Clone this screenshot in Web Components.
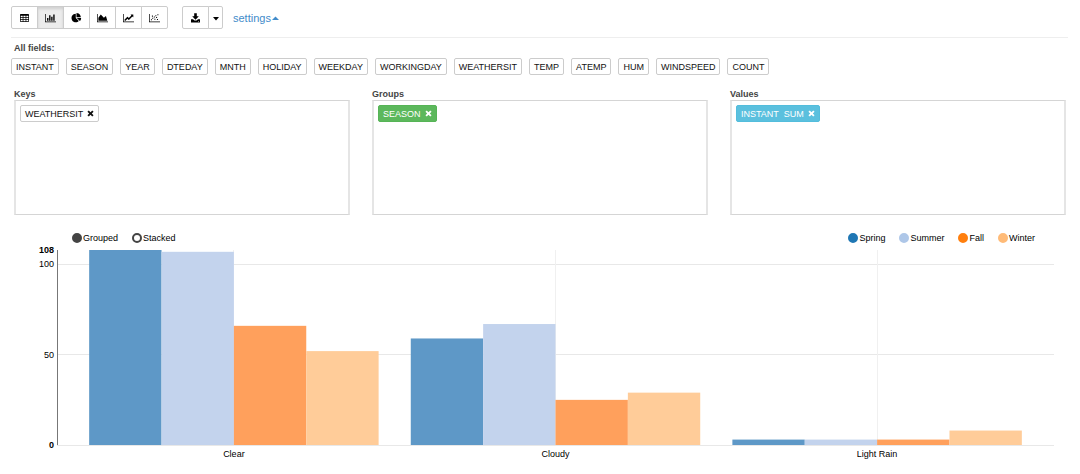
<!DOCTYPE html>
<html lang="en">
<head>
<meta charset="utf-8">
<title>Pivot chart</title>
<style>
body { margin: 0; background: #fff; font-family: "Liberation Sans", Arial, sans-serif; font-size: 9px; line-height: 12px; color: #222; }
</style>
</head>
<body>
<pivot-app></pivot-app>
<script>
const ICONS = {
  table: '<svg viewBox="0 0 11 10"><path fill-rule="evenodd" d="M1.800 1h7.400a.8.8 0 0 1 .8.8v6.400a.8.8 0 0 1-.8.8H1.800a.8.8 0 0 1-.8-.8V1.800a.8.8 0 0 1 .8-.8zM1.700 2.700v1.500h2V2.700zM4.400 2.700v1.500h2.200V2.700zM7.300 2.700v1.500h2V2.700zM1.700 4.900v1.400h2V4.900zM4.400 4.900v1.400h2.200V4.900zM7.300 4.900v1.400h2V4.900zM1.700 7v1.300h2V7zM4.400 7v1.300h2.200V7zM7.300 7v1.300h2V7z"/></svg>',
  bar: '<svg viewBox="0 0 2048 1792"><path d="M640 896v512h-256v-512h256zM1024 384v1024h-256v-1024h256zM2048 1536v128h-2048v-1536h128v1408h1920zM1408 640v768h-256v-768h256zM1792 256v1152h-256v-1152h256z"/></svg>',
  pie: '<svg viewBox="0 0 1792 1792"><path d="M768 890l546 546q-106 108-247.500 168t-298.500 60q-209 0-385.500-103t-279.500-279.500-103-385.500 103-385.500 279.500-279.500 385.500-103v762zM955 896h773q0 157-60 298.500t-168 247.500zM1664 768h-768v-768q209 0 385.500 103t279.500 279.500 103 385.500z"/></svg>',
  area: '<svg viewBox="0 0 2048 1792"><path d="M2048 1536v128h-2048v-1536h128v1408h1920zM1664 512l256 896h-1664v-576l448-576 576 576z"/></svg>',
  line: '<svg viewBox="0 0 2048 1792"><path d="M2048 1536v128h-2048v-1536h128v1408h1920zM1920 288v435q0 21-19.500 29.500t-35.500-7.500l-121-121-633 633q-10 10-23 10t-23-10l-233-233-416 416-192-192 585-585q10-10 23-10t23 10l233 233 464-464-121-121q-16-16-7.500-35.500t29.500-19.500h435q14 0 23 9t9 23z"/></svg>',
  scatter: '<svg viewBox="0 0 2048 1792"><path d="M2048 1536v128h-2048v-1536h128v1408zM360 1130h190v190h-190zM600 840h190v190h-190zM540 450h190v190h-190zM900 620h190v190h-190zM1000 1020h190v190h-190zM1180 380h190v190h-190zM1320 700h190v190h-190zM1560 210h190v190h-190zM1480 1080h190v190h-190z"/></svg>',
  save: '<svg viewBox="0 0 11 10"><path d="M4.200.3h2.600v3h2L5.500 6.700 2.200 3.300h2zM1 6.200h2l1.500 1.400h2L8 6.200h2v3.300H1zM8 7.900v.7h1v-.7z" fill-rule="evenodd"/></svg>',
  caret: '<svg viewBox="0 0 8 10"><path d="M1 4h6L4 7.500z"/></svg>',
  up: '<svg viewBox="0 0 8 10"><path d="M1 7h7L4.500 3.500z"/></svg>',
  remove: '<svg viewBox="0 0 8 8"><path d="M2 .5l2 2 2-2L7.500 2l-2 2 2 2L6 7.500l-2-2-2 2L.5 6l2-2-2-2z"/></svg>'
};

function shadow(el, html) {
  el.attachShadow({ mode: 'open' }).innerHTML = html;
}

customElements.define('ui-icon', class extends HTMLElement {
  connectedCallback() {
    shadow(this, `<style>
      :host { display: block; flex: none; width: 11px; height: 10px; }
      :host([name="remove"]) { width: 7px; height: 7px; }
      :host([name="caret"]), :host([name="up"]) { width: 8px; }
      svg { display: block; width: 100%; height: 100%; fill: currentColor; }
    </style>${ICONS[this.getAttribute('name')]}`);
  }
});

customElements.define('tool-button', class extends HTMLElement {
  connectedCallback() {
    shadow(this, `<style>
      :host { display: block; width: 27px; margin-left: -1px; }
      :host(:first-child) { margin-left: 0; }
      :host([narrow]) { width: 15px; }
      button { display: flex; align-items: center; justify-content: center; box-sizing: border-box; width: 100%; height: 23px; padding: 0; border: 1px solid #ccc; background: #fff; color: #000; }
      :host(:first-child) button { border-radius: 2px 0 0 2px; }
      :host(:last-child) button { border-radius: 0 2px 2px 0; }
      :host([active]) button { background: #ececec; box-shadow: inset 0 2px 3px rgba(0,0,0,.12); }
    </style><button type="button" aria-label="${this.getAttribute('label')}"><ui-icon name="${this.getAttribute('icon')}"></ui-icon></button>`);
  }
});

customElements.define('chart-toolbar', class extends HTMLElement {
  connectedCallback() {
    shadow(this, `<style>
      :host { display: flex; align-items: center; margin: 0 12px 0 11px; padding: 6px 0 8px; border-bottom: 1px solid #eee; }
      .group { display: flex; margin-right: 14px; }
      .group + .group { margin-right: 10px; }
      a { display: flex; align-items: center; font-size: 11px; line-height: 14px; color: #428bca; text-decoration: none; }
    </style>
    <div class="group">
      <tool-button icon="table" label="Table"></tool-button>
      <tool-button icon="bar" label="Bar chart" active></tool-button>
      <tool-button icon="pie" label="Pie chart"></tool-button>
      <tool-button icon="area" label="Area chart"></tool-button>
      <tool-button icon="line" label="Line chart"></tool-button>
      <tool-button icon="scatter" label="Scatter chart"></tool-button>
    </div>
    <div class="group">
      <tool-button icon="save" label="Download"></tool-button>
      <tool-button icon="caret" label="Download options" narrow></tool-button>
    </div>
    <a href="#settings">settings<ui-icon name="up"></ui-icon></a>`);
  }
});

customElements.define('field-chip', class extends HTMLElement {
  connectedCallback() {
    const removable = this.hasAttribute('removable');
    shadow(this, `<style>
      :host { display: inline-flex; align-items: center; gap: 4px; box-sizing: border-box; height: 17px; padding: 0 4px; border: 1px solid #ccc; border-radius: 2px; background: #fff; color: #111; white-space: pre; }
      :host([kind="group"]) { background: #5cb85c; border-color: #56b456; color: #fff; }
      :host([kind="value"]) { background: #5bc0de; border-color: #53bddc; color: #fff; }
      button { display: block; padding: 0; border: 0; background: none; color: inherit; }
    </style><span><slot></slot></span>${removable ? '<button type="button" aria-label="Remove"><ui-icon name="remove"></ui-icon></button>' : ''}`);
  }
});

customElements.define('field-list', class extends HTMLElement {
  connectedCallback() {
    const names = ['INSTANT', 'SEASON', 'YEAR', 'DTEDAY', 'MNTH', 'HOLIDAY', 'WEEKDAY', 'WORKINGDAY', 'WEATHERSIT', 'TEMP', 'ATEMP', 'HUM', 'WINDSPEED', 'COUNT'];
    shadow(this, `<style>
      :host { display: block; padding: 4px 11px 0; }
      .title { margin-left: 3px; font-weight: bold; color: #444; }
      .chips { display: flex; flex-wrap: wrap; gap: 7px; margin-top: 4px; }
    </style><div class="title">All fields:</div>
    <div class="chips">${names.map(n => `<field-chip>${n}</field-chip>`).join('')}</div>`);
  }
});

customElements.define('drop-panel', class extends HTMLElement {
  connectedCallback() {
    shadow(this, `<style>
      :host { display: block; }
      .title { font-weight: bold; color: #444; }
      .box { display: flex; align-items: flex-start; box-sizing: border-box; min-height: 115px; padding: 4px; border: solid; border-width: 1px 2px; border-color: #d5d5d5 #e5e5e5; }
    </style><div class="title">${this.getAttribute('label')}</div><div class="box"><slot></slot></div>`);
  }
});

customElements.define('toggle-option', class extends HTMLElement {
  connectedCallback() {
    const type = this.getAttribute('type');
    shadow(this, `<style>
      :host { display: block; }
      label { display: flex; align-items: center; gap: 1px; color: #000; }
      input { appearance: none; box-sizing: border-box; width: 10px; height: 10px; margin: 0; border: 2px solid var(--dot, #444); border-radius: 50%; background: #fff; }
      input:checked { background: var(--dot, #444); }
    </style><label><input type="${type}" ${this.hasAttribute('checked') ? 'checked' : ''}><slot></slot></label>`);
  }
});

customElements.define('bar-chart', class extends HTMLElement {
  connectedCallback() {
    const max = 108, height = 195;
    const fills = ['#5e98c7', '#c3d3ed', '#ffa05c', '#ffcc99'];
    const data = [['Clear', [108, 107, 66, 52]], ['Cloudy', [59, 67, 25, 29]], ['Light Rain', [3, 3, 3, 8]]];
    const y = v => height - v / max * height;
    // Each band is ten units wide and is separated by one unit of padding.
    const unit = 100 / 31;
    let marks = '', labels = '';
    data.forEach(([name, values], i) => {
      const left = (1 + i * 10) * unit, width = 9 * unit, mid = left + width / 2;
      marks += `<line class="grid tick" x1="${mid}%" x2="${mid}%" y1="0" y2="${height}"/>`;
      values.forEach((v, j) => {
        marks += `<rect x="${left + j * width / 4}%" y="${y(v)}" width="${width / 4}%" height="${height - y(v)}" fill="${fills[j]}"/>`;
      });
      labels += `<text x="${mid}%" y="${height + 12}" text-anchor="middle">${name}</text>`;
    });
    shadow(this, `<style>
      :host { display: block; padding: 17px 26px 23px 57px; }
      .legend { display: flex; gap: 14px; margin: 0 19px 6px 15px; }
      .legend .series { display: flex; gap: 14px; margin-left: auto; }
      svg { display: block; width: 100%; height: 195px; overflow: visible; font-size: 9px; fill: #000; }
      .grid { stroke: #e8e8e8; shape-rendering: crispEdges; }
      .tick { stroke: #f0f0f0; }
      .axis { stroke: #777; shape-rendering: crispEdges; }
      .end { font-weight: bold; }
    </style>
    <div class="legend">
      <toggle-option type="radio" checked>Grouped</toggle-option>
      <toggle-option type="radio">Stacked</toggle-option>
      <div class="series">
        <toggle-option type="checkbox" checked style="--dot:#1f77b4">Spring</toggle-option>
        <toggle-option type="checkbox" checked style="--dot:#aec7e8">Summer</toggle-option>
        <toggle-option type="checkbox" checked style="--dot:#ff7f0e">Fall</toggle-option>
        <toggle-option type="checkbox" checked style="--dot:#ffbb78">Winter</toggle-option>
      </div>
    </div>
    <svg role="img" aria-label="Instant sum by weather and season">
      ${[0, 50, 100].map(v => `<line class="grid" x1="0" x2="100%" y1="${y(v)}" y2="${y(v)}"/>`).join('')}
      ${marks}
      <line class="axis" x1="0" x2="0" y1="0" y2="${height}"/>
      ${[0, 50, 100, 108].map(v => `<text class="${v === 0 || v === max ? 'end' : ''}" x="-3" y="${y(v) + 3}" text-anchor="end">${v}</text>`).join('')}
      ${labels}
    </svg>`);
  }
});

customElements.define('pivot-app', class extends HTMLElement {
  connectedCallback() {
    shadow(this, `<style>
      :host { display: block; }
      .panels { display: grid; grid-template-columns: repeat(3, 1fr); gap: 22px; padding: 13px 14px 0; }
    </style>
    <chart-toolbar></chart-toolbar>
    <field-list></field-list>
    <div class="panels">
      <drop-panel label="Keys"><field-chip removable>WEATHERSIT</field-chip></drop-panel>
      <drop-panel label="Groups"><field-chip removable kind="group">SEASON</field-chip></drop-panel>
      <drop-panel label="Values"><field-chip removable kind="value">INSTANT  SUM</field-chip></drop-panel>
    </div>
    <bar-chart></bar-chart>`);
  }
});
</script>
</body>
</html>
